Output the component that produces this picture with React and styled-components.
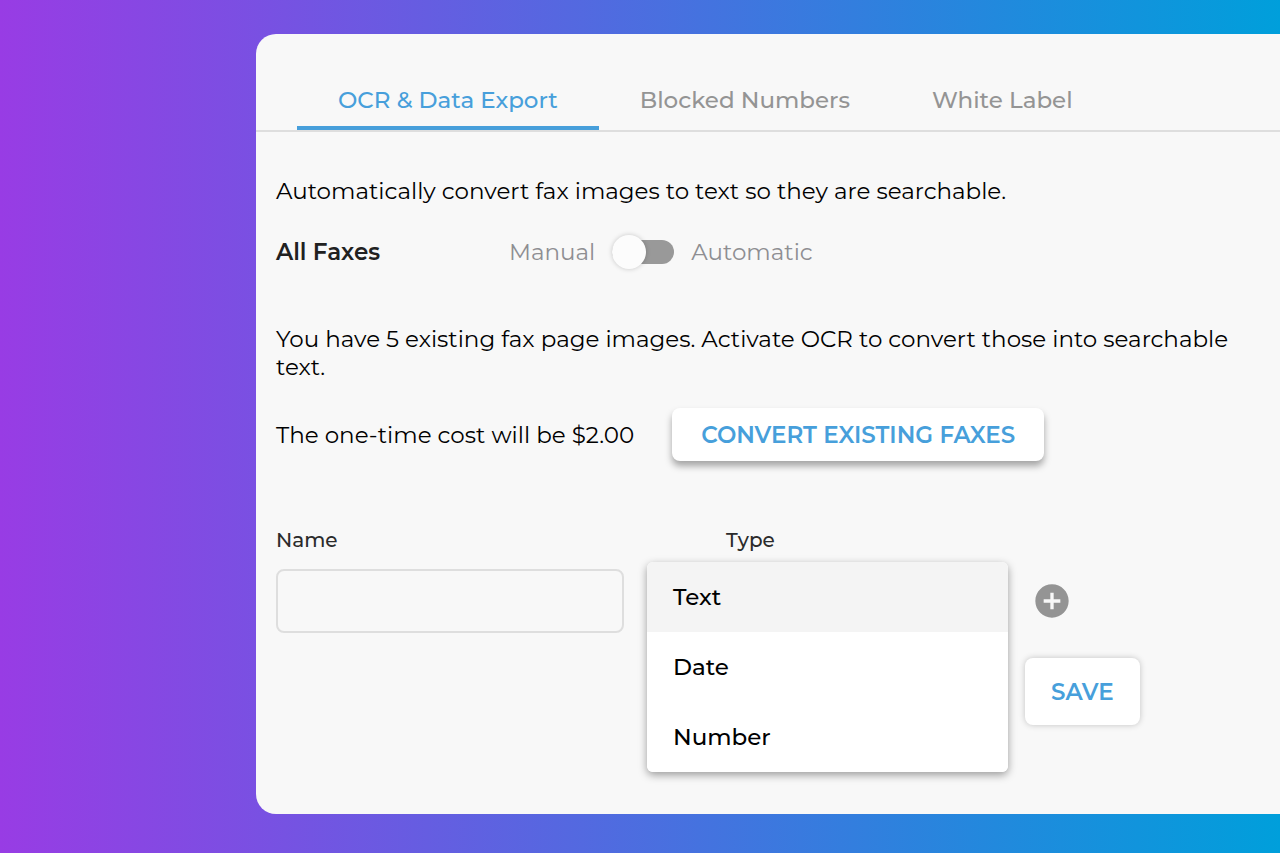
import { useState } from 'react';
import styled, { createGlobalStyle } from 'styled-components';
import { MdAddCircle } from 'react-icons/md';

const tabs = ['OCR & Data Export', 'Blocked Numbers', 'White Label'];
const types = ['Text', 'Date', 'Number'];

const App = () => {
  const [tab, setTab] = useState(tabs[0]);
  const [automatic, setAutomatic] = useState(false);
  const [name, setName] = useState('');
  const [type, setType] = useState(types[0]);
  const [open, setOpen] = useState(true);

  const pickType = (item) => {
    setType(item);
    setOpen(false);
  };

  return (
    <Page>
      <GlobalStyle />
      <Panel>
        <TabBar role="tablist">
          {tabs.map((item) => (
            <Tab
              key={item}
              type="button"
              role="tab"
              aria-selected={item === tab}
              $active={item === tab}
              onClick={() => setTab(item)}
            >
              {item}
            </Tab>
          ))}
        </TabBar>
        <Content>
          <Text>
            Automatically convert fax images to text so they are searchable.
          </Text>
          <SettingRow>
            <SettingName>All Faxes</SettingName>
            <SwitchLabel>
              <span>Manual</span>
              <Switch
                type="checkbox"
                role="switch"
                aria-label="Automatic conversion of all faxes"
                checked={automatic}
                onChange={(e) => setAutomatic(e.target.checked)}
              />
              <span>Automatic</span>
            </SwitchLabel>
          </SettingRow>
          <Text>
            You have 5 existing fax page images. Activate OCR to convert those
            into searchable text.
          </Text>
          <CostRow>
            <Text>The one-time cost will be $2.00</Text>
            <ConvertButton type="button">CONVERT EXISTING FAXES</ConvertButton>
          </CostRow>
          <FieldForm onSubmit={(e) => e.preventDefault()}>
            <NameField>
              <Label htmlFor="name">Name</Label>
              <Input
                id="name"
                type="text"
                value={name}
                onChange={(e) => setName(e.target.value)}
              />
            </NameField>
            <TypeField>
              <TypeLabel htmlFor="type">Type</TypeLabel>
              <SelectBox>
                <Select
                  id="type"
                  value={type}
                  onMouseDown={(e) => {
                    e.preventDefault();
                    setOpen(true);
                  }}
                  onChange={(e) => setType(e.target.value)}
                >
                  {types.map((item) => (
                    <option key={item}>{item}</option>
                  ))}
                </Select>
                {open && (
                  <Menu role="listbox" aria-label="Type">
                    {types.map((item) => (
                      <MenuItem
                        key={item}
                        type="button"
                        role="option"
                        aria-selected={item === type}
                        $selected={item === type}
                        onClick={() => pickType(item)}
                      >
                        {item}
                      </MenuItem>
                    ))}
                  </Menu>
                )}
              </SelectBox>
            </TypeField>
            <Actions>
              <AddButton type="button" aria-label="Add field">
                <MdAddCircle />
              </AddButton>
              <SaveButton type="submit">SAVE</SaveButton>
            </Actions>
          </FieldForm>
        </Content>
      </Panel>
    </Page>
  );
};

const GlobalStyle = createGlobalStyle`
  :root {
    --blue: #479fdb;
    --grey: #949494;
    --surface: #f8f8f8;
    --line: #dedede;
  }
  * {
    box-sizing: border-box;
    margin: 0;
  }
  body {
    color: #000;
    font-family: Montserrat, Inter, sans-serif;
    font-size: 23px;
    line-height: 28px;
  }
  button, input, select {
    font: inherit;
  }
  button {
    border: none;
    cursor: pointer;
  }
`;

const Page = styled.main`
  display: flex;
  min-height: 100vh;
  padding: 34px 0 39px 20%;
  background: linear-gradient(90deg, #983ce4, #009fdb);
`;

const Panel = styled.section`
  flex: 1;
  min-width: 0;
  background: var(--surface);
  border-radius: 20px 0 0 20px;
`;

const TabBar = styled.div`
  display: flex;
  padding: 36px 0 0 41px;
  border-bottom: 2px solid var(--line);
`;

const Tab = styled.button`
  padding: 16px 41px 12px;
  background: none;
  border-bottom: 4px solid
    ${({ $active }) => ($active ? 'var(--blue)' : 'transparent')};
  color: ${({ $active }) => ($active ? 'var(--blue)' : 'var(--grey)')};
  font-weight: 500;
  white-space: nowrap;
`;

const Content = styled.div`
  padding: 45px 20px 40px;
`;

const Text = styled.p`
  color: #000;
`;

const SettingRow = styled.div`
  display: flex;
  align-items: center;
  margin: 33px 0 59px;
`;

const SettingName = styled.h2`
  width: 233px;
  color: #212121;
  font-size: 23px;
  font-weight: 600;
`;

const SwitchLabel = styled.label`
  display: flex;
  align-items: center;
  gap: 17px;
  color: #8e8e92;
  cursor: pointer;
`;

const Switch = styled.input`
  display: flex;
  align-items: center;
  width: 62px;
  height: 24px;
  appearance: none;
  background: ${({ checked }) => (checked ? 'var(--blue)' : '#999')};
  border-radius: 12px;
  cursor: pointer;
  &::before {
    content: '';
    width: 34px;
    height: 34px;
    flex-shrink: 0;
    margin-left: ${({ checked }) => (checked ? '28px' : '0')};
    background: #fcfcfc;
    border-radius: 50%;
    box-shadow: 0 0 5px rgba(0, 0, 0, 0.2);
  }
`;

const CostRow = styled.div`
  display: flex;
  align-items: center;
  gap: 38px;
  margin-top: 27px;
`;

const ConvertButton = styled.button`
  height: 53px;
  padding: 0 29px;
  background: #fff;
  border-radius: 8px;
  box-shadow: 0 5px 7px rgba(0, 0, 0, 0.34);
  color: var(--blue);
  font-weight: 600;
`;

const FieldForm = styled.form`
  display: grid;
  grid-template-columns: minmax(0, 371px) minmax(0, 361px) auto;
  justify-content: start;
  margin-top: 65px;
`;

const NameField = styled.div`
  padding-right: 23px;
`;

const TypeField = styled.div``;

const Label = styled.label`
  display: block;
  margin-bottom: 15px;
  color: #2b2b2b;
  font-size: 20px;
  font-weight: 500;
`;

const TypeLabel = styled(Label)`
  padding-left: 79px;
`;

const Input = styled.input`
  width: 100%;
  height: 64px;
  padding: 0 16px;
  background: transparent;
  border: 2px solid var(--line);
  border-radius: 8px;
`;

const SelectBox = styled.div`
  position: relative;
`;

const Select = styled.select`
  width: 100%;
  height: 64px;
  padding: 0 24px;
  background: transparent;
  border: 2px solid var(--line);
  border-radius: 8px;
`;

const Menu = styled.div`
  position: absolute;
  top: -7px;
  left: 0;
  width: 100%;
  overflow: hidden;
  background: #fff;
  border-radius: 6px;
  box-shadow: 0 3px 9px rgba(0, 0, 0, 0.38);
`;

const MenuItem = styled.button`
  display: block;
  width: 100%;
  height: 70px;
  padding: 0 26px;
  background: ${({ $selected }) => ($selected ? '#f4f4f4' : '#fff')};
  color: #000;
  font-weight: 500;
  text-align: left;
`;

const Actions = styled.div`
  display: flex;
  flex-direction: column;
  align-items: flex-start;
  gap: 37px;
  padding: 55px 0 0 17px;
`;

const AddButton = styled.button`
  padding: 0 7px;
  background: none;
  color: var(--grey);
  font-size: 40px;
  line-height: 1;
  svg {
    display: block;
  }
`;

const SaveButton = styled.button`
  height: 67px;
  padding: 0 26px;
  background: #fff;
  border-radius: 8px;
  box-shadow: 0 0 6px rgba(0, 0, 0, 0.22);
  color: var(--blue);
  font-weight: 600;
`;

export default App;
